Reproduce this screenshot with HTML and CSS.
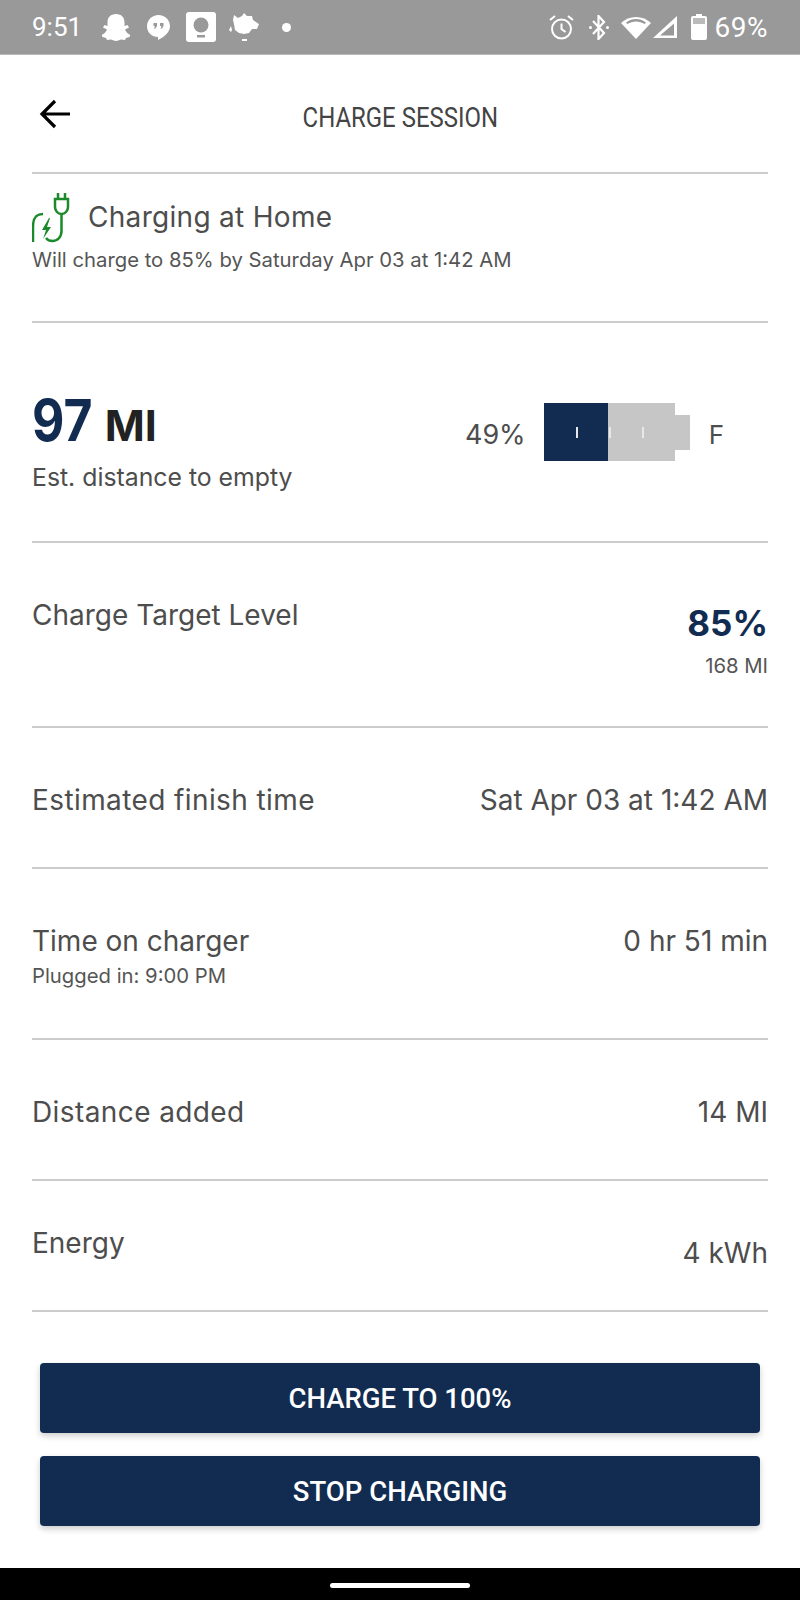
FILE: index.html
```html
<!DOCTYPE html>
<html lang="en">
<head>
    <meta charset="UTF-8">
    <meta name="viewport" content="width=device-width, initial-scale=1.0">
    <title>Charge Session</title>
    <link rel="stylesheet" href="styles.css">
</head>
<body>
    <div class="status-bar">
        <div class="status-left">
            <span class="status-time">9:51</span>
            <svg class="ic-ghost" viewBox="0 0 28 27"><path d="M14 0c5.500 0 8.500 3.500 8.500 8.500V12l3-1 1.500 2.500-4 2c1 2.500 2.500 4 5.500 5.500l-1 2-3.500 1-1 2-4-.5c-2 .5-3.500 1.500-5 1.500s-3-1-5-1.500l-4 .5-1-2-3.500-1-1-2c3-1.500 4.500-3 5.500-5.500l-4-2L2.500 11l3 1V8.500C5.500 3.500 8.500 0 14 0z" fill="#fff"/></svg>
            <svg class="ic-hangouts" viewBox="0 0 23 25"><path d="M11.500 0C5 0 0 5 0 11.300S5 22 11 22v3c6-3 12-7.500 12-13.700C23 5 18 0 11.500 0z" fill="#fff"/><path d="M6.500 8h3.500v3l-1.500 2.500H7l1-2.500H6.500zM13 8h3.500v3L15 13.500h-1.500l1-2.500H13z" fill="#999"/></svg>
            <svg class="ic-keep" viewBox="0 0 30 30"><rect width="30" height="30" rx="3" fill="#fff"/><circle cx="15" cy="13" r="7.500" fill="#999"/><rect x="11" y="23" width="8" height="2.500" fill="#999"/></svg>
            <svg class="ic-blob" viewBox="0 0 31 29"><path d="M5 2l4 3 4-2 2-3 3 3 5 0 1 4 6 4-2 5-5 0-3 4-5 1-5-1-4-3-1-6-1-4zM0 17l2-4 1 4-1 2zM13 26h5v2h-5z" fill="#fff"/></svg>
            <span class="status-dot"></span>
        </div>
        <div class="status-right">
            <svg class="ic-alarm" viewBox="0 0 25 25"><circle cx="12.500" cy="14" r="9.500" fill="none" stroke="#fff" stroke-width="2"/><path d="M12.500 8.500V14l4 3M1 5l5-4M24 5l-5-4" fill="none" stroke="#fff" stroke-width="2"/></svg>
            <svg class="ic-bt" viewBox="0 0 20 25"><path d="M4 6l11 12-5.500 6V1L15 7 4 19" fill="none" stroke="#fff" stroke-width="2.200"/><circle cx="1.500" cy="12.500" r="1.500" fill="#fff"/><circle cx="18.500" cy="12.500" r="1.500" fill="#fff"/></svg>
            <svg class="ic-wifi" viewBox="0 0 30 24"><path d="M15 24L0 8c8-8 22-8 30 0z" fill="#fff"/><path d="M15 4c-3.500 0-7 1-10 3.500l1.500 1.500c5-3.500 12-3.500 17 0L25 7.500C22 5 18.500 4 15 4z" fill="#999"/></svg>
            <svg class="ic-signal" viewBox="0 0 24 22"><path d="M24 0v22H0zM21 7.500L7 19.500h14z" fill="#fff" fill-rule="evenodd"/></svg>
            <svg class="ic-battery" viewBox="0 0 16 26"><path d="M5 0h6v2h3a2 2 0 0 1 2 2v20a2 2 0 0 1-2 2H2a2 2 0 0 1-2-2V4a2 2 0 0 1 2-2h3z" fill="#fff"/><rect x="2" y="4" width="12" height="6" fill="#bbb"/></svg>
            <span class="status-pct">69%</span>
        </div>
    </div>

    <div class="main-content">
        <div class="header">
            <svg class="back-arrow" viewBox="0 0 32 30"><path d="M31 15H3M16 2L3 15l13 13" fill="none" stroke="#000" stroke-width="3.200"/></svg>
            <span class="header-title">CHARGE SESSION</span>
        </div>

        <div class="section charging-status">
            <div class="charging-top">
                <svg class="plug-icon" viewBox="0 0 38 50"><path d="M1 49V34c0-8 2-13 10-13M26 0v6M33 0v6M23 6h13v8c0 4-3 7-6.500 7S23 18 23 14zM29.500 21v17c0 6-4 10-9 10-3 0-5-1-6.500-3" fill="none" stroke="#1a8a2b" stroke-width="2.500"/><path d="M17 25l-7 12h4l-3 9 8-12h-4l3-9z" fill="#1a8a2b"/></svg>
                <span class="charging-title">Charging at Home</span>
            </div>
            <p class="small-text">Will charge to 85% by Saturday Apr 03 at 1:42 AM</p>
        </div>

        <div class="section range">
            <div>
                <div class="range-value"><span class="range-num">97</span> <span class="range-unit">MI</span></div>
                <div class="range-label">Est. distance to empty</div>
            </div>
            <div class="battery">
                <span class="battery-pct">49%</span>
                <div class="battery-bar">
                    <div class="battery-cells">
                        <div class="battery-fill" style="width: 49%"></div>
                        <i class="tick tick-1"></i>
                        <i class="tick tick-2"></i>
                        <i class="tick tick-3"></i>
                    </div>
                    <div class="battery-nub"></div>
                </div>
                <span class="battery-full">F</span>
            </div>
        </div>

        <div class="section row row-target">
            <span class="row-label">Charge Target Level</span>
            <div class="target-value">
                <div class="target-pct">85%</div>
                <div class="small-text">168 MI</div>
            </div>
        </div>

        <div class="section row row-finish">
            <span class="row-label label-wide">Estimated finish time</span>
            <span class="row-label">Sat Apr 03 at 1:42 AM</span>
        </div>

        <div class="section row row-time">
            <div>
                <div class="row-label">Time on charger</div>
                <div class="small-text plugged">Plugged in: 9:00 PM</div>
            </div>
            <span class="row-label">0 hr 51 min</span>
        </div>

        <div class="section row row-distance">
            <span class="row-label label-wide">Distance added</span>
            <span class="row-label">14 MI</span>
        </div>

        <div class="section row row-energy">
            <span class="row-label">Energy</span>
            <span class="row-label energy-value">4 kWh</span>
        </div>

        <div class="actions">
            <button class="action-btn">CHARGE TO 100%</button>
            <button class="action-btn">STOP CHARGING</button>
        </div>
    </div>

    <div class="nav-bar"><span class="nav-pill"></span></div>
</body>
</html>
```

FILE: styles.css
```css
* {
    box-sizing: border-box;
}
body {
    margin: 0;
    width: 800px;
    height: 1600px;
    background-color: #fff;
    font-family: Inter, "Noto Sans", sans-serif;
    color: #4d4d4d;
    display: flex;
    flex-direction: column;
}
svg {
    display: block;
    flex: none;
}

/* status bar */
.status-bar {
    height: 55px;
    padding: 0 32px;
    background-color: #999;
    border-bottom: 1px solid #bbb;
    display: flex;
    justify-content: space-between;
    align-items: center;
    color: #fff;
    font-family: Roboto, sans-serif;
    font-size: 26px;
}
.status-left,
.status-right {
    display: flex;
    align-items: center;
}
.status-time {
    width: 70px;
}
.ic-ghost { width: 28px; height: 27px; }
.ic-hangouts { width: 23px; height: 25px; margin-left: 17px; }
.ic-keep { width: 30px; height: 30px; margin-left: 16px; }
.ic-blob { width: 31px; height: 29px; margin-left: 13px; }
.status-dot {
    width: 9px;
    height: 9px;
    margin-left: 22px;
    border-radius: 50%;
    background-color: #fff;
}
.ic-alarm { width: 25px; height: 25px; }
.ic-bt { width: 20px; height: 25px; margin-left: 15px; }
.ic-wifi { width: 30px; height: 24px; margin-left: 12px; }
.ic-signal { width: 24px; height: 22px; margin-left: 2px; }
.ic-battery { width: 16px; height: 26px; margin-left: 14px; }
.status-pct {
    margin-left: 8px;
    font-size: 28px;
    letter-spacing: 0.5px;
}

.main-content {
    flex: 1;
    padding: 0 32px;
}

/* header */
.header {
    height: 119px;
    border-bottom: 2px solid #ccc;
    display: flex;
    align-items: center;
    justify-content: center;
    position: relative;
}
.back-arrow {
    position: absolute;
    left: 7px;
    top: 44px;
    width: 32px;
    height: 30px;
}
.header-title {
    margin-top: 7px;
    font-family: Roboto, sans-serif;
    font-size: 28px;
    color: #444;
    transform: scaleX(0.855);
}

.section {
    border-bottom: 2px solid #ccc;
}
.small-text {
    margin: 0;
    font-size: 20.3px;
    color: #555;
}

/* charging status */
.charging-status {
    height: 149px;
    padding-top: 19px;
}
.charging-top {
    display: flex;
    align-items: center;
    height: 50px;
}
.plug-icon {
    width: 38px;
    height: 50px;
}
.charging-title {
    margin: 0 0 3px 18px;
    font-size: 28px;
    letter-spacing: 0.3px;
}
.charging-status .small-text {
    margin-top: 4px;
}

/* range */
.range {
    height: 220px;
    padding-top: 68px;
    display: flex;
    justify-content: space-between;
    align-items: flex-start;
}
.range-value {
    line-height: 58px;
}
.range-num {
    display: inline-block;
    margin-right: -10px;
    font-size: 58px;
    font-weight: 700;
    color: #122c51;
    transform: scaleX(0.86);
    transform-origin: left;
}
.range-unit {
    margin-left: 8px;
    font-size: 43px;
    font-weight: 700;
    color: #222;
}
.range-label {
    margin-top: -2px;
    font-size: 24.8px;
}
.battery {
    display: flex;
    align-items: center;
    margin-top: 12px;
    margin-right: 44px;
}
.battery-pct {
    padding-top: 4px;
    font-size: 27px;
}
.battery-bar {
    margin-left: 18px;
    display: flex;
    align-items: center;
}
.battery-cells {
    width: 131px;
    height: 58px;
    background-color: #c6c6c6;
    position: relative;
}
.battery-fill {
    height: 100%;
    background-color: #122c51;
}
.tick {
    position: absolute;
    top: 24px;
    width: 2px;
    height: 11px;
    background-color: #e8e8e8;
}
.tick-1 { left: 32px; }
.tick-2 { left: 65px; }
.tick-3 { left: 98px; }
.battery-nub {
    width: 15px;
    height: 35px;
    background-color: #c6c6c6;
}
.battery-full {
    padding-top: 4px;
    margin-left: 19px;
    font-size: 26px;
}

/* rows */
.row {
    display: flex;
    justify-content: space-between;
    align-items: flex-start;
}
.row-label {
    font-size: 28px;
}
.label-wide {
    letter-spacing: 0.4px;
}
.row-target {
    height: 185px;
    padding-top: 55px;
}
.target-value {
    text-align: right;
}
.target-pct {
    margin-top: 4px;
    font-size: 35px;
    font-weight: 700;
    color: #122c51;
}
.target-value .small-text {
    margin-top: 9px;
}
.row-finish {
    height: 141px;
    padding-top: 55px;
}
.row-time {
    height: 171px;
    padding-top: 55px;
}
.plugged {
    margin-top: 5px;
}
.row-distance {
    height: 141px;
    padding-top: 55px;
}
.row-energy {
    height: 131px;
    padding-top: 45px;
}
.energy-value {
    margin-top: 10px;
}

/* buttons */
.actions {
    margin: 51px 8px 0;
    display: flex;
    flex-direction: column;
    gap: 23px;
}
.action-btn {
    height: 70px;
    border: none;
    border-radius: 4px;
    background-color: #122c51;
    box-shadow: 0 3px 6px rgba(0,0,0,0.2);
    color: #fff;
    font-family: Roboto, sans-serif;
    font-size: 27.5px;
    font-weight: 500;
}

.nav-bar {
    height: 32px;
    background-color: #000;
    display: flex;
    justify-content: center;
    padding-top: 15px;
}
.nav-pill {
    width: 140px;
    height: 5px;
    border-radius: 3px;
    background-color: #fff;
}
```
